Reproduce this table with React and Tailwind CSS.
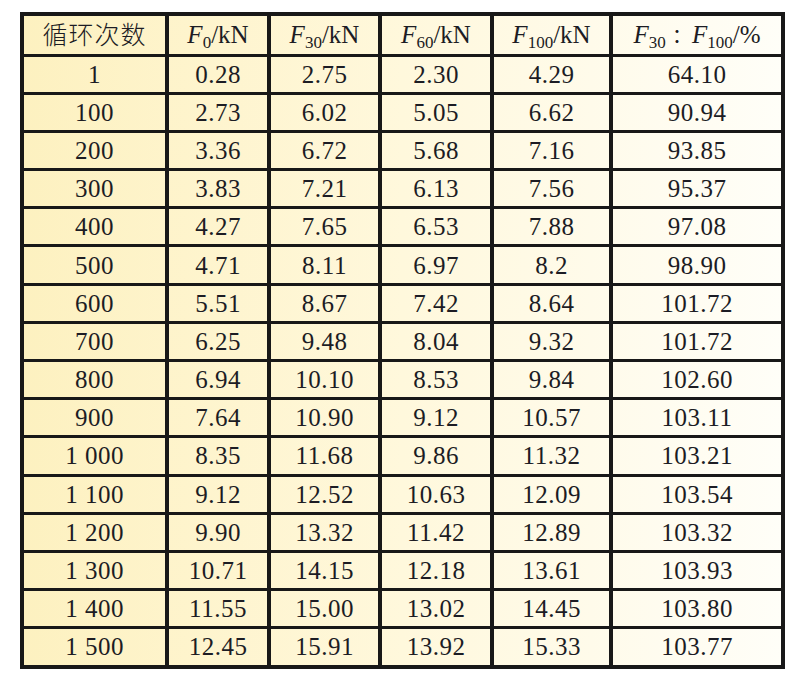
import React from 'react'

const rows = [
    ['1', '0.28', '2.75', '2.30', '4.29', '64.10'],
    ['100', '2.73', '6.02', '5.05', '6.62', '90.94'],
    ['200', '3.36', '6.72', '5.68', '7.16', '93.85'],
    ['300', '3.83', '7.21', '6.13', '7.56', '95.37'],
    ['400', '4.27', '7.65', '6.53', '7.88', '97.08'],
    ['500', '4.71', '8.11', '6.97', '8.2', '98.90'],
    ['600', '5.51', '8.67', '7.42', '8.64', '101.72'],
    ['700', '6.25', '9.48', '8.04', '9.32', '101.72'],
    ['800', '6.94', '10.10', '8.53', '9.84', '102.60'],
    ['900', '7.64', '10.90', '9.12', '10.57', '103.11'],
    ['1 000', '8.35', '11.68', '9.86', '11.32', '103.21'],
    ['1 100', '9.12', '12.52', '10.63', '12.09', '103.54'],
    ['1 200', '9.90', '13.32', '11.42', '12.89', '103.32'],
    ['1 300', '10.71', '14.15', '12.18', '13.61', '103.93'],
    ['1 400', '11.55', '15.00', '13.02', '14.45', '103.80'],
    ['1 500', '12.45', '15.91', '13.92', '15.33', '103.77'],
]

function Force({ n }) {
    return (
        <>
            <i>F</i><sub className="text-[17px]">{n}</sub>
        </>
    )
}

const headers = [
    <span className="font-['Noto_Sans_CJK_SC',sans-serif] text-[25px] font-light tracking-[1px]">循环次数</span>,
    <><Force n="0" />/kN</>,
    <><Force n="30" />/kN</>,
    <><Force n="60" />/kN</>,
    <><Force n="100" />/kN</>,
    <><Force n="30" /> <span className="font-['Noto_Sans_CJK_SC',sans-serif] text-[20px]">：</span><Force n="100" />/%</>,
]

function Cell({ children, last }) {
    return (
        <div className={'flex items-center justify-center ' + (last ? '' : 'border-r-4 border-[#181818]')}>
            {children}
        </div>
    )
}

function App() {

    return (
        <div className="w-[802px] h-[681px] bg-white pt-[12px] pl-[20px]">
            <div className="w-[765px] border-4 border-[#181818] bg-linear-to-r from-[#fdf1c0] via-[#fff8dc] to-[#fffef8] text-[25px] leading-none text-[#1c1c24] font-['Liberation_Serif',serif]">

                <div className="grid grid-cols-[145px_102px_111px_112px_119px_168px] h-[40.5px] border-b-[3px] border-[#181818]">
                    {headers.map((h, i) => (
                        <Cell key={i} last={i === 5}>
                            <span className="whitespace-nowrap">{h}</span>
                        </Cell>
                    ))}
                </div>

                {rows.map((r, ri) => (
                    <div key={ri} className={'grid grid-cols-[145px_102px_111px_112px_119px_168px] ' + (ri === rows.length - 1 ? 'h-[35.2px]' : 'h-[38.2px] border-b-[3px] border-[#181818]')}>
                        {r.map((v, ci) => (
                            <Cell key={ci} last={ci === 5}>
                                <span className="whitespace-pre tracking-[0.5px]">{v}</span>
                            </Cell>
                        ))}
                    </div>
                ))}

            </div>
        </div>
    )
}

export default App
